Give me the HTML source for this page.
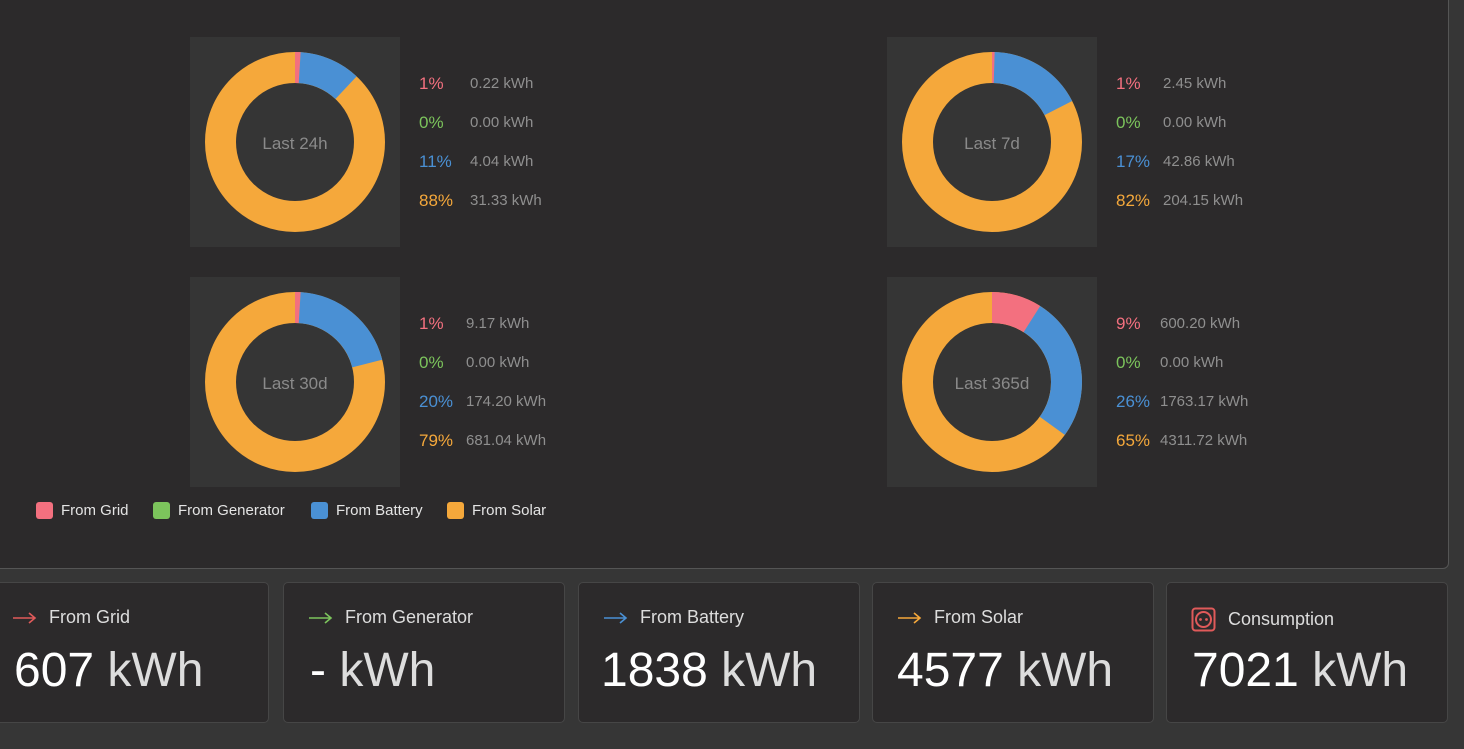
<!DOCTYPE html>
<html><head><meta charset="utf-8"><style>
*{margin:0;padding:0;box-sizing:border-box}
body{width:1464px;height:749px;background:#363636;font-family:"Liberation Sans",sans-serif;position:relative;overflow:hidden}
.panel{position:absolute;left:-10px;top:-10px;width:1459px;height:579px;background:#2c2a2b;border:1px solid #555;border-radius:6px}
.box{position:absolute;width:210px;height:210px;background:#353535}
.box svg{position:absolute;left:0;top:0}
.lbl{position:absolute;left:0;top:0;width:210px;height:210px;line-height:214px;text-align:center;color:#8a8a8a;font-size:17px}
.row{position:absolute;font-size:15px;color:#8f8f8f;white-space:nowrap}
.row b{font-weight:normal;position:absolute;left:0;font-size:17px;top:-1px}
.r{color:#f3707f}.g{color:#7cc45c}.bl{color:#4a90d4}.o{color:#f5a83b}
.leg{position:absolute;top:502px;font-size:15px;color:#e4e4e4;display:flex;align-items:center}
.leg i{display:inline-block;width:17px;height:17px;border-radius:3px;margin-right:8px}
.card{position:absolute;top:582px;width:282px;height:141px;background:#2c2a2b;border:1px solid #464646;border-radius:5px}
.card .t{position:absolute;left:24px;top:24px;font-size:18px;color:#ddd;display:flex;align-items:center}
.card .t svg.a{margin-right:12px}
.card .v{position:absolute;left:30px;top:60px;font-size:48px;color:#fff;white-space:nowrap}
.card .v span{color:#ddd}
</style></head><body>
<div class="panel"></div>

<div class="box" style="left:190px;top:37px">
<svg width="210" height="210"><g transform="rotate(-90 105 105)" fill="none" stroke-width="31">
<circle cx="105" cy="105" r="74.5" stroke="#f5a83b"/>
<circle cx="105" cy="105" r="74.5" stroke="#f3707f" stroke-dasharray="4.7 470"/>
<circle cx="105" cy="105" r="74.5" stroke="#4a90d4" stroke-dasharray="51.5 470" stroke-dashoffset="-4.7"/>
</g></svg><div class="lbl">Last 24h</div></div>
<div class="box" style="left:887px;top:37px">
<svg width="210" height="210"><g transform="rotate(-90 105 105)" fill="none" stroke-width="31">
<circle cx="105" cy="105" r="74.5" stroke="#f5a83b"/>
<circle cx="105" cy="105" r="74.5" stroke="#f3707f" stroke-dasharray="4.7 470" stroke-dashoffset="2.5"/>
<circle cx="105" cy="105" r="74.5" stroke="#4a90d4" stroke-dasharray="79.6 470" stroke-dashoffset="-2.2"/>
</g></svg><div class="lbl">Last 7d</div></div>
<div class="box" style="left:190px;top:277px">
<svg width="210" height="210"><g transform="rotate(-90 105 105)" fill="none" stroke-width="31">
<circle cx="105" cy="105" r="74.5" stroke="#f5a83b"/>
<circle cx="105" cy="105" r="74.5" stroke="#f3707f" stroke-dasharray="4.7 470"/>
<circle cx="105" cy="105" r="74.5" stroke="#4a90d4" stroke-dasharray="93.6 470" stroke-dashoffset="-4.7"/>
</g></svg><div class="lbl">Last 30d</div></div>
<div class="box" style="left:887px;top:277px">
<svg width="210" height="210"><g transform="rotate(-90 105 105)" fill="none" stroke-width="31">
<circle cx="105" cy="105" r="74.5" stroke="#f5a83b"/>
<circle cx="105" cy="105" r="74.5" stroke="#f3707f" stroke-dasharray="42.1 470"/>
<circle cx="105" cy="105" r="74.5" stroke="#4a90d4" stroke-dasharray="121.7 470" stroke-dashoffset="-42.1"/>
</g></svg><div class="lbl">Last 365d</div></div>

<div class="row" style="left:419px;top:75px"><b class="r">1%</b><span style="margin-left:51px">0.22 kWh</span></div>
<div class="row" style="left:419px;top:114px"><b class="g">0%</b><span style="margin-left:51px">0.00 kWh</span></div>
<div class="row" style="left:419px;top:153px"><b class="bl">11%</b><span style="margin-left:51px">4.04 kWh</span></div>
<div class="row" style="left:419px;top:192px"><b class="o">88%</b><span style="margin-left:51px">31.33 kWh</span></div>

<div class="row" style="left:1116px;top:75px"><b class="r">1%</b><span style="margin-left:47px">2.45 kWh</span></div>
<div class="row" style="left:1116px;top:114px"><b class="g">0%</b><span style="margin-left:47px">0.00 kWh</span></div>
<div class="row" style="left:1116px;top:153px"><b class="bl">17%</b><span style="margin-left:47px">42.86 kWh</span></div>
<div class="row" style="left:1116px;top:192px"><b class="o">82%</b><span style="margin-left:47px">204.15 kWh</span></div>

<div class="row" style="left:419px;top:315px"><b class="r">1%</b><span style="margin-left:47px">9.17 kWh</span></div>
<div class="row" style="left:419px;top:354px"><b class="g">0%</b><span style="margin-left:47px">0.00 kWh</span></div>
<div class="row" style="left:419px;top:393px"><b class="bl">20%</b><span style="margin-left:47px">174.20 kWh</span></div>
<div class="row" style="left:419px;top:432px"><b class="o">79%</b><span style="margin-left:47px">681.04 kWh</span></div>

<div class="row" style="left:1116px;top:315px"><b class="r">9%</b><span style="margin-left:44px">600.20 kWh</span></div>
<div class="row" style="left:1116px;top:354px"><b class="g">0%</b><span style="margin-left:44px">0.00 kWh</span></div>
<div class="row" style="left:1116px;top:393px"><b class="bl">26%</b><span style="margin-left:44px">1763.17 kWh</span></div>
<div class="row" style="left:1116px;top:432px"><b class="o">65%</b><span style="margin-left:44px">4311.72 kWh</span></div>

<div class="leg" style="left:36px"><i style="background:#f3707f"></i>From Grid</div>
<div class="leg" style="left:153px"><i style="background:#7cc45c"></i>From Generator</div>
<div class="leg" style="left:311px"><i style="background:#4a90d4"></i>From Battery</div>
<div class="leg" style="left:447px"><i style="background:#f5a83b"></i>From Solar</div>

<div class="card" style="left:-13px"><div class="t"><svg class="a" width="25" height="12" viewBox="0 0 25 12"><path d="M1 6H23M17 1L23 6L17 11" fill="none" stroke="#e05a5a" stroke-width="1.6"/></svg>From Grid</div><div class="v" style="left:26px">607 <span>kWh</span></div></div>
<div class="card" style="left:283px"><div class="t"><svg class="a" width="25" height="12" viewBox="0 0 25 12"><path d="M1 6H23M17 1L23 6L17 11" fill="none" stroke="#7cc45c" stroke-width="1.6"/></svg>From Generator</div><div class="v" style="left:26px">- <span>kWh</span></div></div>
<div class="card" style="left:578px"><div class="t"><svg class="a" width="25" height="12" viewBox="0 0 25 12"><path d="M1 6H23M17 1L23 6L17 11" fill="none" stroke="#4a90d4" stroke-width="1.6"/></svg>From Battery</div><div class="v" style="left:22px">1838 <span>kWh</span></div></div>
<div class="card" style="left:872px"><div class="t"><svg class="a" width="25" height="12" viewBox="0 0 25 12"><path d="M1 6H23M17 1L23 6L17 11" fill="none" stroke="#f5a83b" stroke-width="1.6"/></svg>From Solar</div><div class="v" style="left:24px">4577 <span>kWh</span></div></div>
<div class="card" style="left:1166px"><div class="t" style="left:24px"><svg width="25" height="25" viewBox="0 0 25 25" style="margin-right:12px"><rect x="1.5" y="1.5" width="22" height="22" rx="3" fill="none" stroke="#e05a5a" stroke-width="2"/><circle cx="12.5" cy="12.5" r="7.5" fill="none" stroke="#e05a5a" stroke-width="2"/><circle cx="9.5" cy="12.5" r="1.4" fill="#e05a5a"/><circle cx="15.5" cy="12.5" r="1.4" fill="#e05a5a"/></svg>Consumption</div><div class="v" style="left:25px">7021 <span>kWh</span></div></div>
</body></html>
